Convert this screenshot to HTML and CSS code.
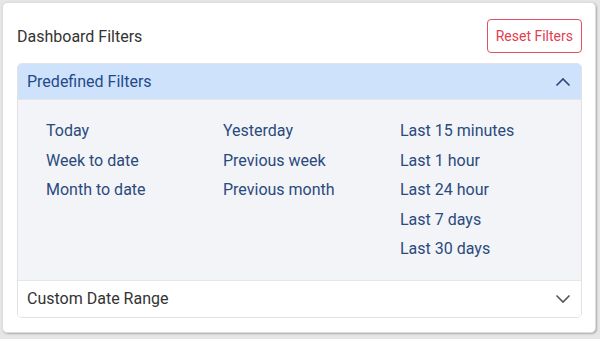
FILE: index.html
```html
<!DOCTYPE html>
<html lang="en">
<head>
    <meta charset="UTF-8">
    <meta name="viewport" content="width=device-width, initial-scale=1.0">
    <title>Dashboard Filters</title>
    <link rel="stylesheet" href="styles.css">
</head>
<body>
    <div class="card">
        <div class="card-head">
            <div class="card-title">Dashboard Filters</div>
            <button class="reset-btn">Reset Filters</button>
        </div>
        <div class="accordion">
            <div class="acc-header open">
                <span>Predefined Filters</span>
                <svg class="chev" width="16" height="10" viewBox="0 0 16 10">
                    <path d="M1.5 8.5 L8 2 L14.5 8.5" fill="none" stroke="currentColor" stroke-width="1.6"/>
                </svg>
            </div>
            <div class="acc-body">
                <div class="filter-col">
                    <a class="filter">Today</a>
                    <a class="filter">Week to date</a>
                    <a class="filter">Month to date</a>
                </div>
                <div class="filter-col">
                    <a class="filter">Yesterday</a>
                    <a class="filter">Previous week</a>
                    <a class="filter">Previous month</a>
                </div>
                <div class="filter-col">
                    <a class="filter">Last 15 minutes</a>
                    <a class="filter">Last 1 hour</a>
                    <a class="filter">Last 24 hour</a>
                    <a class="filter">Last 7 days</a>
                    <a class="filter">Last 30 days</a>
                </div>
            </div>
            <div class="acc-header">
                <span>Custom Date Range</span>
                <svg class="chev" width="16" height="10" viewBox="0 0 16 10">
                    <path d="M1.5 1.5 L8 8 L14.5 1.5" fill="none" stroke="currentColor" stroke-width="1.6"/>
                </svg>
            </div>
        </div>
    </div>
</body>
</html>
```

FILE: styles.css
```css
body, html {
    margin: 0;
    padding: 0;
    background-color: #e6e6e6;
}
body {
    padding: 2px 4px 5px 2px;
    font-family: Roboto, "Liberation Sans", sans-serif;
}
.card {
    background: #fff;
    border: 1px solid #dcdcdc;
    border-radius: 5px;
    box-shadow: 1px 1px 2px rgba(0, 0, 0, 0.25);
    padding: 16px 13px 14px 14px;
    height: 331px;
    box-sizing: border-box;
}
.card-head {
    display: flex;
    justify-content: space-between;
    align-items: center;
    margin-bottom: 10px;
}
.card-title {
    font-size: 16px;
    color: #333;
}
.reset-btn {
    font-family: inherit;
    font-size: 14px;
    color: #e0404f;
    background: #fff;
    border: 1px solid #e0505e;
    border-radius: 4px;
    height: 34px;
    padding: 0 8px;
}
.accordion {
    border: 1px solid #e2e2e2;
    border-radius: 5px;
    overflow: hidden;
}
.acc-header {
    display: flex;
    justify-content: space-between;
    align-items: center;
    height: 36px;
    padding: 0 10px 0 9px;
    font-size: 16px;
    color: #333;
    background: #fff;
}
.acc-header.open {
    background: #cfe2fc;
    color: #1f4a8a;
    height: 35px;
}
.acc-header .chev {
    color: #555;
}
.acc-header.open .chev {
    color: #2a4a7a;
}
.acc-body {
    display: grid;
    grid-template-columns: 177px 177px 1fr;
    padding: 16px 0 16px 28px;
    background: #f2f4f8;
    border-top: 1px solid #e4e6ea;
    border-bottom: 1px solid #e4e6ea;
}
.filter-col {
    display: flex;
    flex-direction: column;
}
.filter {
    font-size: 16px;
    line-height: 29.5px;
    color: #2b4a7c;
    cursor: pointer;
}
```
